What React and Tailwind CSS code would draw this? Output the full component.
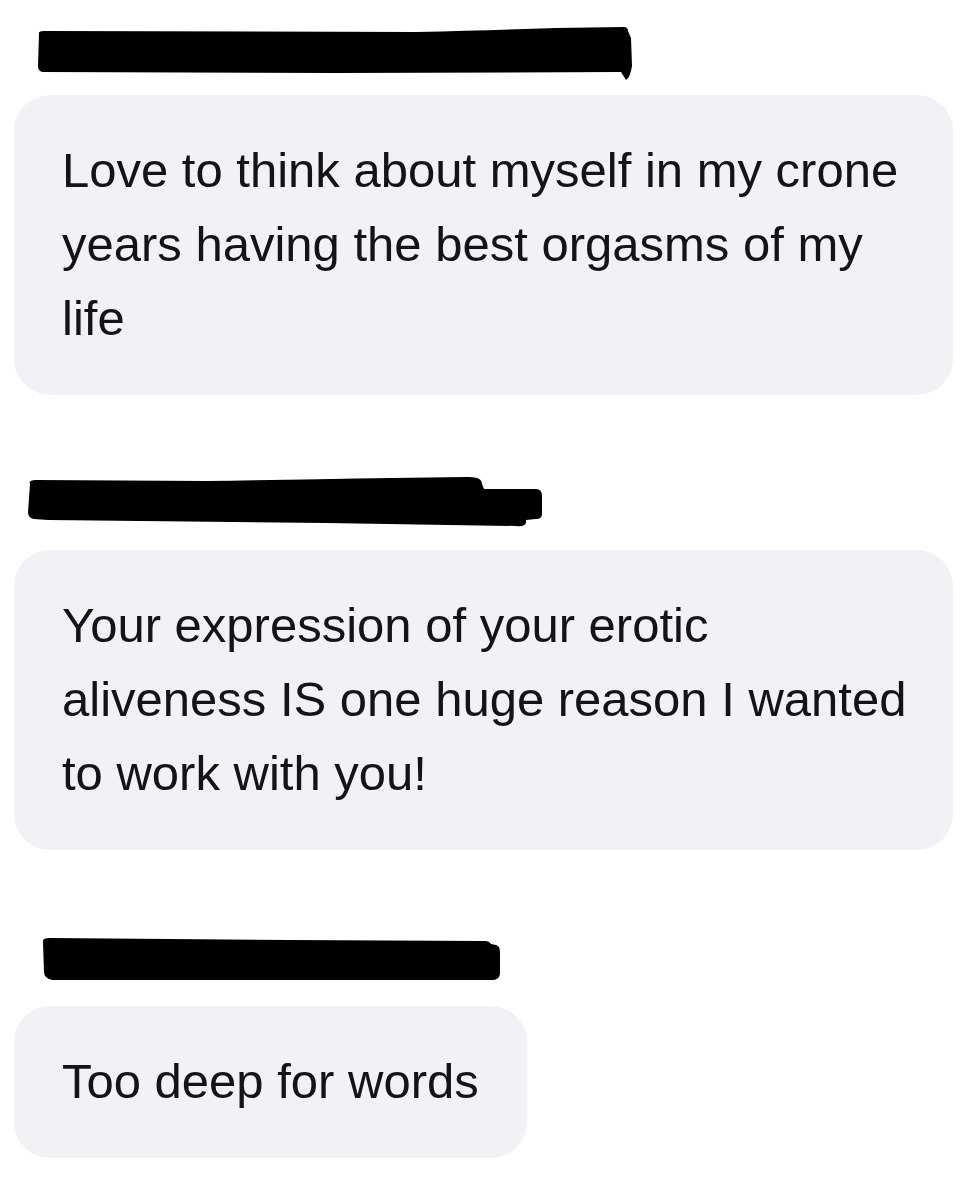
import React from 'react'

const Redaction = ({ width, height, d, className }) => (
  <svg width={width} height={height} viewBox={`0 0 ${width} ${height}`} className={className}>
    <path d={d} fill="#000" />
  </svg>
)

const Bubble = ({ children, className }) => (
  <div className={`bg-[#f1f1f6] rounded-[36px] pl-[48px] pt-[38px] pb-[40px] text-[49px] leading-[74px] text-[#141416] ${className}`}>
    {children}
  </div>
)

const App = () => {
  return (
    <div className="w-[977px] h-[1183px] bg-white overflow-hidden font-['Liberation_Sans',Arial,sans-serif] px-[14px] pt-[26px]">
      <Redaction
        width={600}
        height={56}
        className="ml-[22px]"
        d="M3 8 Q2 5 8 5 L380 6 Q460 4 520 2 L588 1 Q592 1 592 5 L595 12 L596 40 Q594 52 590 54 L585 46 L300 47 L8 46 Q2 46 2 40 Z"
      />
      <Bubble className="mt-[13px] w-[939px]">
        Love to think about myself in my crone<br />
        years having the best orgasms of my<br />
        life
      </Bubble>

      <Redaction
        width={520}
        height={54}
        className="ml-[12px] mt-[81px]"
        d="M4 8 Q2 4 10 4 L180 5 Q300 3 440 1 Q456 0 456 8 L458 13 L510 13 Q516 13 516 20 L516 38 Q516 43 510 43 L500 44 L500 47 Q498 51 490 50 L300 47 L22 44 L8 43 Q2 42 2 36 Z"
      />
      <Bubble className="mt-[20px] w-[939px]">
        Your expression of your erotic<br />
        aliveness IS one huge reason I wanted<br />
        to work with you!
      </Bubble>

      <Redaction
        width={470}
        height={48}
        className="ml-[26px] mt-[86px]"
        d="M3 6 Q2 2 10 2 L250 4 L445 5 Q449 5 451 8 L456 9 Q460 10 460 16 L460 38 Q459 44 452 44 L120 44 L12 44 Q4 42 4 36 Z"
      />
      <Bubble className="mt-[22px] w-[513px]">
        Too deep for words
      </Bubble>
    </div>
  )
}

export default App
